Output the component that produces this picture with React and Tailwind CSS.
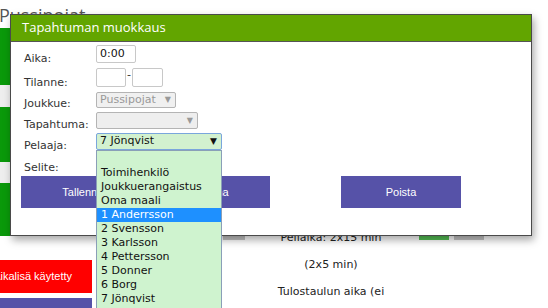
import React from 'react';

const options = [
  '',
  'Toimihenkilö',
  'Joukkuerangaistus',
  'Oma maali',
  '1 Anderrsson',
  '2 Svensson',
  '3 Karlsson',
  '4 Pettersson',
  '5 Donner',
  '6 Borg',
  '7 Jönqvist',
];

const selected = '1 Anderrsson';

const FormRow = ({ label, height, className = '', children }) => (
  <div className={`flex items-end ${className}`} style={{ height }}>
    <span className="w-[72px] leading-[13px] -mb-[2px] text-[#333]">{label}</span>
    {children}
  </div>
);

const Background = () => (
  <div className="absolute inset-0">
    <div className="flex h-[28px] text-[18px] text-[#555] font-['Open_Sans',sans-serif] leading-[26px] pt-[2px]">
      <span className="-ml-[1px] w-[164px]">Pussipojat</span>
      <span className="w-[217px] pt-[7px]">Kotijoukkue</span>
      <span className="pt-[7px]">Vierasjoukkue</span>
    </div>
    <div className="flex">
      <div className="w-[92px] flex flex-col">
        <div className="h-[57px] bg-[#0a990a]" />
        <div className="h-[22px] bg-[#eeeeee]" />
        <div className="h-[55px] bg-[#0a990a]" />
        <div className="h-[21px] bg-[#eeeeee]" />
        <div className="h-[53px] bg-[#0a990a]" />
        <div className="h-[24px]" />
        <div className="h-[33px] bg-[#ff0000] flex items-center justify-end pr-[20px] overflow-hidden whitespace-nowrap text-white text-[11px] font-['Liberation_Sans',sans-serif]">
          Aikalisä käytetty
        </div>
        <div className="mt-[5px] h-[20px] bg-[#5652a8]" />
      </div>
      <div className="ml-[131px] w-[22px] mt-[192px] h-[20px] bg-[#c4c4c4]" />
      <div className="ml-[26px] w-[120px] mt-[196px] text-center text-[11px] leading-[27px] text-[#222] whitespace-nowrap">
        <div>Peliaika: 2x15 min</div>
        <div>(2x5 min)</div>
        <div>Tulostaulun aika (ei</div>
      </div>
      <div className="ml-[28px] mt-[192px] flex gap-[5px]">
        <div className="w-[30px] h-[20px] bg-[#55c255]" />
        <div className="w-[30px] h-[20px] bg-[#c4c4c4]" />
      </div>
    </div>
  </div>
);

const Dialog = () => (
  <div className="absolute left-[10px] top-[14px] w-[522px] h-[222px] bg-white border border-[#4a4a4a] shadow-[2px_4px_8px_rgba(0,0,0,0.35)]">
    <div className="h-[27px] bg-[#62a500] border-b border-[#555] flex items-center pl-[11px] text-white text-[13px] font-['Open_Sans',sans-serif]">
      Tapahtuman muokkaus
    </div>
    <div className="pl-[13px] pt-[3px] text-[11px]">
      <FormRow label="Aika:" height={18}>
        <div className="w-[40px] h-[18px] border border-[#c8c8c8] rounded-[2px] bg-white pl-[3px] leading-[16px] text-[#111]">
          0:00
        </div>
      </FormRow>
      <FormRow label="Tilanne:" height={19} className="mt-[5px]">
        <div className="w-[30px] h-[19px] border border-[#c8c8c8] rounded-[2px] bg-white" />
        <span className="self-center mx-[1px] -mt-[4px] text-[#333]">-</span>
        <div className="w-[31px] h-[19px] border border-[#c8c8c8] rounded-[2px] bg-white" />
      </FormRow>
      <FormRow label="Joukkue:" height={16} className="mt-[5px]">
        <div className="w-[80px] h-[16px] border border-[#b4b4b4] rounded-[2px] bg-[#f0f0f0] flex items-center justify-between pl-[3px] pr-[4px] text-[#999]">
          <span>Pussipojat</span>
          <span className="text-[8px]">▼</span>
        </div>
      </FormRow>
      <FormRow label="Tapahtuma:" height={17} className="mt-[4px]">
        <div className="w-[102px] h-[17px] border border-[#b4b4b4] rounded-[2px] bg-[#eeeeee] flex items-center justify-end pr-[4px] text-[#999]">
          <span className="text-[8px]">▼</span>
        </div>
      </FormRow>
      <FormRow label="Pelaaja:" height={17} className="mt-[4px]">
        <div className="w-[126px] h-[17px] border border-[#7aa6dc] rounded-[2px] bg-[#d2f1cf] flex items-center justify-between pl-[3px] pr-[4px] text-[#111]">
          <span>7 Jönqvist</span>
          <span className="text-[9px]">▼</span>
        </div>
      </FormRow>
      <div className="mt-[11px] h-[13px] leading-[13px] text-[#333]">Selite:</div>
    </div>
    <div className="mt-[2px] flex pl-[10px] text-white text-[11px] font-['Liberation_Sans',sans-serif]">
      <div className="w-[249px] h-[32px] bg-[#5652a8] flex items-center justify-center whitespace-nowrap">
        Tallenna ja lisää toinen tapahtuma
      </div>
      <div className="ml-[71px] w-[120px] h-[32px] bg-[#5652a8] flex items-center justify-center">
        Poista
      </div>
    </div>
  </div>
);

const OptionList = () => (
  <div className="absolute left-[96px] top-[150px] w-[126px] h-[175px] border border-[#8a9fb8] bg-[#cff3cf] pt-[1px] text-[11px] text-[#111]">
    {options.map((o, i) => (
      <div
        key={i}
        className={`h-[14px] leading-[14px] pl-[4px] whitespace-nowrap ${o === selected ? 'bg-[#1e90ff] text-white' : ''}`}
      >
        {o}
      </div>
    ))}
  </div>
);

export default function App() {
  return (
    <div className="relative w-[548px] h-[308px] overflow-hidden bg-white font-['DejaVu_Sans',sans-serif]">
      <Background />
      <Dialog />
      <OptionList />
    </div>
  );
}
